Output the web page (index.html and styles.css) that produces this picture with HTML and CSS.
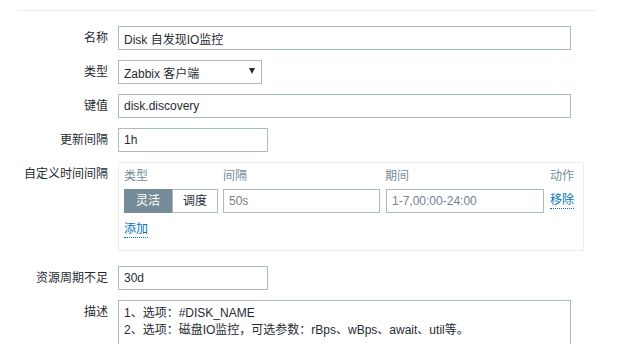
FILE: index.html
```html
<!DOCTYPE html>
<html>
  <head>
    <meta charset="UTF-8">
    <title>发现规则</title>
    <link rel="stylesheet" href="styles.css">
  </head>
  <body>
    <div class="page">
      <div class="top-line"></div>

      <ul class="form-list">
        <li class="form-row">
          <label class="form-label">名称</label>
          <div class="form-field">
            <input class="text-box wide" type="text" value="Disk 自发现IO监控">
          </div>
        </li>

        <li class="form-row">
          <label class="form-label">类型</label>
          <div class="form-field">
            <div class="select-box">
              <span>Zabbix 客户端</span>
              <span class="arrow"></span>
            </div>
          </div>
        </li>

        <li class="form-row">
          <label class="form-label">键值</label>
          <div class="form-field">
            <input class="text-box wide" type="text" value="disk.discovery">
          </div>
        </li>

        <li class="form-row">
          <label class="form-label">更新间隔</label>
          <div class="form-field">
            <input class="text-box short" type="text" value="1h">
          </div>
        </li>

        <li class="form-row">
          <label class="form-label">自定义时间间隔</label>
          <div class="form-field">
            <div class="interval-box">
              <div class="interval-grid">
                <div class="col-head">类型</div>
                <div class="col-head">间隔</div>
                <div class="col-head">期间</div>
                <div class="col-head">动作</div>

                <div class="radio-group">
                  <span class="radio-btn active">灵活</span>
                  <span class="radio-btn">调度</span>
                </div>
                <input class="text-box dim" type="text" value="50s">
                <input class="text-box dim" type="text" value="1-7,00:00-24:00">
                <a class="link" href="#">移除</a>
              </div>
              <a class="link add-link" href="#">添加</a>
            </div>
          </div>
        </li>

        <li class="form-row after-box">
          <label class="form-label">资源周期不足</label>
          <div class="form-field">
            <input class="text-box short" type="text" value="30d">
          </div>
        </li>

        <li class="form-row">
          <label class="form-label">描述</label>
          <div class="form-field">
            <div class="desc-box">
              1、选项：#DISK_NAME<br>
              2、选项：磁盘IO监控，可选参数：rBps、wBps、await、util等。
            </div>
          </div>
        </li>
      </ul>
    </div>
  </body>
</html>
```

FILE: styles.css
```css
body {
  margin: 0;
  background-color: #fff;
  color: #1f2c33;
  font-family: "Liberation Sans", "Noto Sans CJK SC", sans-serif;
  font-size: 12px;
  overflow: hidden;
}

.page {
  padding: 10px 0 0 18px;
  width: 577px;
}

.top-line {
  border-top: 1px solid #ebeef0;
}

.form-list {
  list-style: none;
  margin: 15px 0 0 0;
  padding: 0;
}

.form-row {
  display: flex;
  gap: 10px;
  margin-bottom: 10px;
}

/* resource row sits a bit lower after the interval box */
.form-row.after-box {
  margin-top: 15px;
}

.form-label {
  width: 90px;
  flex: none;
  text-align: right;
  line-height: 24px;
}

.form-field {
  flex: 1;
}

.text-box {
  box-sizing: border-box;
  height: 24px;
  margin: 0;
  padding: 0 5px;
  border: 1px solid #acbbc2;
  background: #fff;
  color: #1f2c33;
  font-family: inherit;
  font-size: 12px;
}

.text-box.dim {
  color: #6f8390;
}

.text-box.wide {
  width: 453px;
}

.text-box.short {
  width: 150px;
}

.select-box {
  box-sizing: border-box;
  width: 144px;
  height: 24px;
  padding: 0 6px 0 5px;
  border: 1px solid #acbbc2;
  display: flex;
  align-items: center;
  justify-content: space-between;
}

.select-box .arrow {
  width: 0;
  height: 0;
  margin-top: -2px;
  border-left: 3px solid transparent;
  border-right: 3px solid transparent;
  border-top: 6px solid #1f2c33;
}

.interval-box {
  box-sizing: border-box;
  width: 466px;
  height: 89px;
  border: 1px solid #ebeef0;
  padding: 5px 9px 0 5px;
}

.interval-grid {
  display: grid;
  grid-template-columns: 94px 157px 158px 1fr;
  column-gap: 5px;
  row-gap: 5px;
  align-items: center;
}

.interval-grid .text-box {
  width: 100%;
}

.interval-grid .text-box:nth-of-type(2) {
  margin-left: 1px;
  width: 158px;
}

.col-head {
  color: #768d99;
  line-height: 16px;
}

.col-head:nth-child(4) {
  text-align: right;
}

.radio-group {
  display: flex;
}

.radio-btn {
  box-sizing: border-box;
  height: 24px;
  line-height: 22px;
  text-align: center;
  border: 1px solid #acbbc2;
  width: 46px;
}

.radio-btn.active {
  width: 48px;
  background-color: #768d99;
  border-color: #768d99;
  color: #fff;
}

.link {
  color: #0275b8;
  text-decoration: none;
  border-bottom: 1px dotted #0275b8;
  justify-self: end;
  line-height: 15px;
}

.add-link {
  display: inline-block;
  margin-top: 9px;
}

.desc-box {
  box-sizing: border-box;
  width: 453px;
  height: 44px;
  border: 1px solid #acbbc2;
  border-bottom: none;
  padding: 4px 5px 0;
  line-height: 17px;
  overflow: hidden;
}
```
